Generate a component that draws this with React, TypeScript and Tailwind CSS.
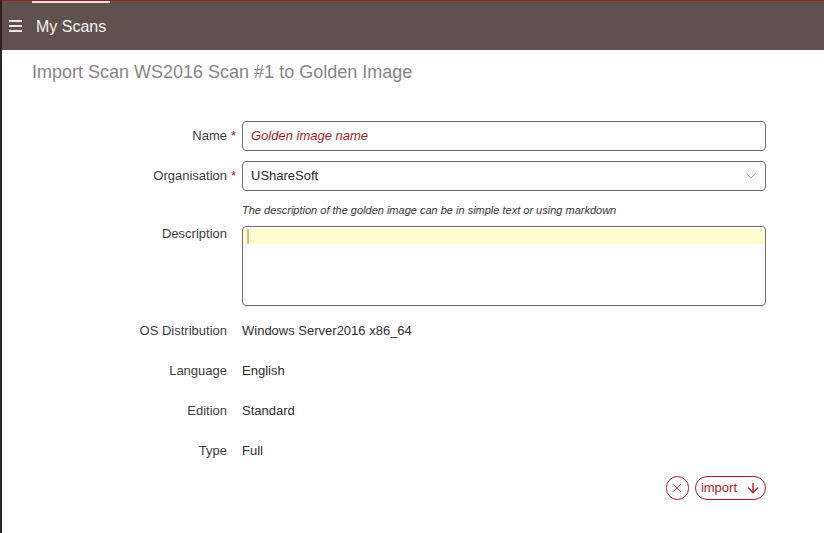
import { X, ArrowDown, ChevronDown } from "lucide-react";

function Label({ text, required }: { text: string; required?: boolean }) {
    return (
        <span className="relative">
            {text}
            {required && <span className="absolute left-full ml-[4px] text-[#a31e23]">*</span>}
        </span>
    );
}

function Row({ label, required, children, className }: { label: string; required?: boolean; children: React.ReactNode; className?: string }) {
    return (
        <div className={"flex items-center " + (className ?? "")}>
            <div className="w-[240px] pr-[15px] text-right text-[13px] leading-[20px] text-[#3c3c3c] shrink-0">
                <Label text={label} required={required} />
            </div>
            <div className="flex-1">{children}</div>
        </div>
    );
}

export default function App() {
    return (
        <div className="w-[824px] h-[533px] flex bg-white font-['Liberation_Sans',Arial,sans-serif] overflow-hidden">
            <div className="w-[2px] bg-[#2f2220] shrink-0"></div>
            <div className="flex-1 flex flex-col">
                <div className="h-[1px] bg-[#a3161d]"></div>
                <div className="h-[49px] bg-[#5f524d] flex items-center relative">
                    <div className="absolute left-[30px] top-0 w-[78px] h-[2px] bg-[#e6e3e2]"></div>
                    <div className="ml-[7px] flex flex-col gap-[3px] w-[13px]">
                        <div className="h-[2px] bg-[#ece8e6]"></div>
                        <div className="h-[2px] bg-[#ece8e6]"></div>
                        <div className="h-[2px] bg-[#ece8e6]"></div>
                    </div>
                    <div className="ml-[14px] mt-[2px] text-[16px] text-[#f3f0ef]">My Scans</div>
                </div>

                <div className="pl-[30px] pt-[10px] text-[18px] leading-[24px] text-[#858585]">Import Scan WS2016 Scan #1 to Golden Image</div>

                <div className="mt-[37px] pr-[58px] flex flex-col">
                    <Row label="Name" required>
                        <div className="h-[30px] border border-[#6e6e6e] rounded-[4px] flex items-center px-[8px] text-[13px] italic text-[#a31e23]">
                            Golden image name
                        </div>
                    </Row>
                    <Row label="Organisation" required className="mt-[10px]">
                        <div className="h-[30px] border border-[#6e6e6e] rounded-[4px] flex items-center justify-between pl-[8px] pr-[6px] text-[13px] text-[#2a2a2a]">
                            UShareSoft
                            <ChevronDown size={16} strokeWidth={1} className="text-[#777]" />
                        </div>
                    </Row>
                    <div className="ml-[240px] mt-[12px] text-[11px] leading-[14px] italic text-[#333]">
                        The description of the golden image can be in simple text or using markdown
                    </div>
                    <div className="flex items-start mt-[9px]">
                        <div className="w-[240px] pr-[15px] text-right text-[13px] leading-[16px] text-[#3c3c3c] shrink-0">
                            Description
                        </div>
                        <div className="flex-1 h-[80px] border border-[#6e6e6e] rounded-[4px] pt-[2px]">
                            <div className="h-[15px] bg-[#fefccd] flex">
                                <div className="ml-[4px] w-[2px] h-[15px] bg-[#c8c59a]"></div>
                            </div>
                        </div>
                    </div>
                    <Row label="OS Distribution" className="mt-[15px]">
                        <div className="text-[13px] leading-[20px] text-[#2e2e2e]">Windows Server2016 x86_64</div>
                    </Row>
                    <Row label="Language" className="mt-[20px]">
                        <div className="text-[13px] leading-[20px] text-[#2e2e2e]">English</div>
                    </Row>
                    <Row label="Edition" className="mt-[20px]">
                        <div className="text-[13px] leading-[20px] text-[#2e2e2e]">Standard</div>
                    </Row>
                    <Row label="Type" className="mt-[20px]">
                        <div className="text-[13px] leading-[20px] text-[#2e2e2e]">Full</div>
                    </Row>
                    <div className="flex justify-end gap-[6px] mt-[15px]">
                        <button type="button" className="w-[23px] h-[24px] rounded-full border border-[#a31e23] flex items-center justify-center text-[#a31e23]">
                            <X size={14} strokeWidth={1.5} />
                        </button>
                        <button type="button" className="h-[24px] rounded-full border border-[#a31e23] flex items-center pl-[5px] pr-[4px] text-[13px] text-[#a31e23] gap-[8px]">
                            import
                            <ArrowDown size={16} strokeWidth={2} />
                        </button>
                    </div>
                </div>
            </div>
        </div>
    );
}
